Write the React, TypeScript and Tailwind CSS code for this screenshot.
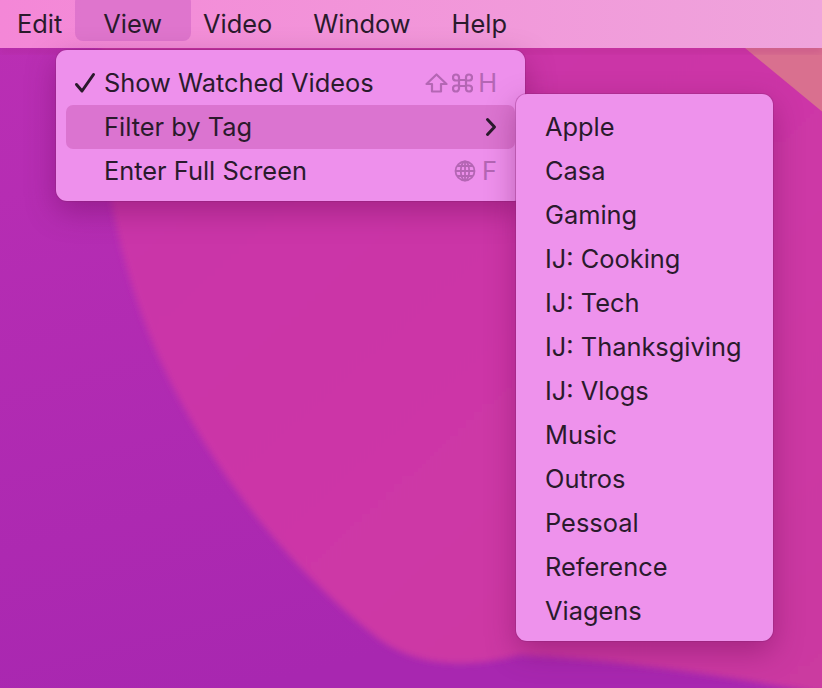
/* macOS menu bar with View menu and Filter by Tag submenu */

const tags = [
  "Apple",
  "Casa",
  "Gaming",
  "IJ: Cooking",
  "IJ: Tech",
  "IJ: Thanksgiving",
  "IJ: Vlogs",
  "Music",
  "Outros",
  "Pessoal",
  "Reference",
  "Viagens",
];

const font = "font-['Inter','Noto_Sans','DejaVu_Sans',sans-serif]";

function Wallpaper() {
  return (
    <svg className="absolute inset-0" width="822" height="688" viewBox="0 0 822 688">
      <defs>
        <linearGradient id="base" x1="0" y1="0" x2="0.3" y2="1">
          <stop offset="0" stopColor="#bb2fb4" />
          <stop offset="1" stopColor="#a827b0" />
        </linearGradient>
        <linearGradient id="band" x1="0" y1="0" x2="1" y2="1">
          <stop offset="0" stopColor="#c934aa" />
          <stop offset="0.6" stopColor="#cd37a6" />
          <stop offset="1" stopColor="#cb3aa0" />
        </linearGradient>
        <filter id="soft" x="-10%" y="-10%" width="120%" height="120%">
          <feGaussianBlur stdDeviation="3" />
        </filter>
      </defs>
      <rect width="822" height="688" fill="url(#base)" />
      <path
        d="M100 40 C 96 160, 120 270, 160 360 C 210 470, 290 570, 380 640 C 420 668, 470 668, 520 655 C 620 660, 720 675, 830 695 L 830 40 Z"
        fill="url(#band)"
        filter="url(#soft)"
      />
      <path d="M745 48 L 830 48 L 830 118 Z" fill="#d9708f" />
      <rect y="44" width="822" height="10" fill="#a8207f" opacity="0.2" filter="url(#soft)" />
    </svg>
  );
}

function Check() {
  return (
    <svg width="22" height="22" viewBox="0 0 22 22" className="absolute left-[8px] top-[11px]">
      <path d="M2.5 12.5 L8 19 L19.5 2.5" fill="none" stroke="#2a1a2c" strokeWidth="3" strokeLinecap="round" strokeLinejoin="round" />
    </svg>
  );
}

function Chevron() {
  return (
    <svg width="12" height="20" viewBox="0 0 12 20">
      <path d="M2.5 2.5 L9.5 10 L2.5 17.5" fill="none" stroke="#2a1a2c" strokeWidth="3" strokeLinecap="round" strokeLinejoin="round" />
    </svg>
  );
}

function Shift() {
  return (
    <svg width="23" height="20" viewBox="0 0 23 20" fill="none" stroke="#b466b4" strokeWidth="2.2" strokeLinejoin="round">
      <path d="M11.5 1.5 L21.5 11 H16 V18.5 H7 V11 H1.5 Z" />
    </svg>
  );
}

function Cmd() {
  return (
    <svg width="21" height="20" viewBox="0 0 21 20" fill="none" stroke="#b466b4" strokeWidth="2.2">
      <path d="M7 7 H14 V13 H7 Z M7 7 V4.5 A3 3 0 1 0 4 7.5 H7 M14 7 V4.5 A3 3 0 1 1 17 7.5 H14 M7 13 V15.5 A3 3 0 1 1 4 12.5 H7 M14 13 V15.5 A3 3 0 1 0 17 12.5 H14" />
    </svg>
  );
}

function Globe() {
  return (
    <svg width="22" height="22" viewBox="0 0 22 22" fill="none" stroke="#b466b4" strokeWidth="1.8">
      <circle cx="11" cy="11" r="9.5" />
      <ellipse cx="11" cy="11" rx="4.2" ry="9.5" />
      <path d="M11 1.5 V20.5 M1.5 11 H20.5 M3.2 6 H18.8 M3.2 16 H18.8" />
    </svg>
  );
}

export default function App() {
  return (
    <div className={`relative w-[822px] h-[688px] overflow-hidden ${font} text-[#2a1a2c]`}>
      <Wallpaper />

      {/* Menu bar */}
      <div className="relative h-[48px] flex items-center pl-[17px] gap-[41px] text-[25.4px] bg-gradient-to-r from-[#f487d7] to-[#efa4dc]">
        <span>Edit</span>
        <span className="relative">
          <span className="absolute -left-[28px] -right-[29px] -top-[11px] h-[47px] rounded-[8px] bg-[#d96fca]/80" />
          <span className="relative">View</span>
        </span>
        <span>Video</span>
        <span>Window</span>
        <span>Help</span>
      </div>

      {/* View menu */}
      <div className="absolute left-[56px] top-[50px] w-[469px] pt-[11px] pb-[8px] px-[10px] rounded-[11px] bg-[#ee90ec] shadow-[0_10px_30px_rgba(90,0,70,0.35),0_0_0_1px_rgba(150,40,130,0.35)] text-[25.4px]">
        <div className="relative h-[44px] flex items-center pl-[38px] pr-[18px]">
          <Check />
          <span className="flex-1">Show Watched Videos</span>
          <span className="flex items-center gap-[4px] text-[#b466b4]">
            <Shift />
            <Cmd />
            <span className="ml-[1px]">H</span>
          </span>
        </div>
        <div className="h-[44px] flex items-center pl-[38px] pr-[18px] rounded-[7px] bg-[#db74d0]">
          <span className="flex-1">Filter by Tag</span>
          <Chevron />
        </div>
        <div className="h-[44px] flex items-center pl-[38px] pr-[18px]">
          <span className="flex-1">Enter Full Screen</span>
          <span className="flex items-center gap-[6px] text-[#b466b4]">
            <Globe />
            <span>F</span>
          </span>
        </div>
      </div>

      {/* Tag submenu */}
      <div className="absolute left-[516px] top-[94px] w-[257px] pt-[11px] pb-[8px] px-[10px] rounded-[11px] bg-[#ee92ec] shadow-[0_10px_30px_rgba(90,0,70,0.35),0_0_0_1px_rgba(150,40,130,0.35)] text-[25.4px]">
        {tags.map((tag) => (
          <div key={tag} className="h-[44px] flex items-center pl-[19px]">
            {tag}
          </div>
        ))}
      </div>
    </div>
  );
}
